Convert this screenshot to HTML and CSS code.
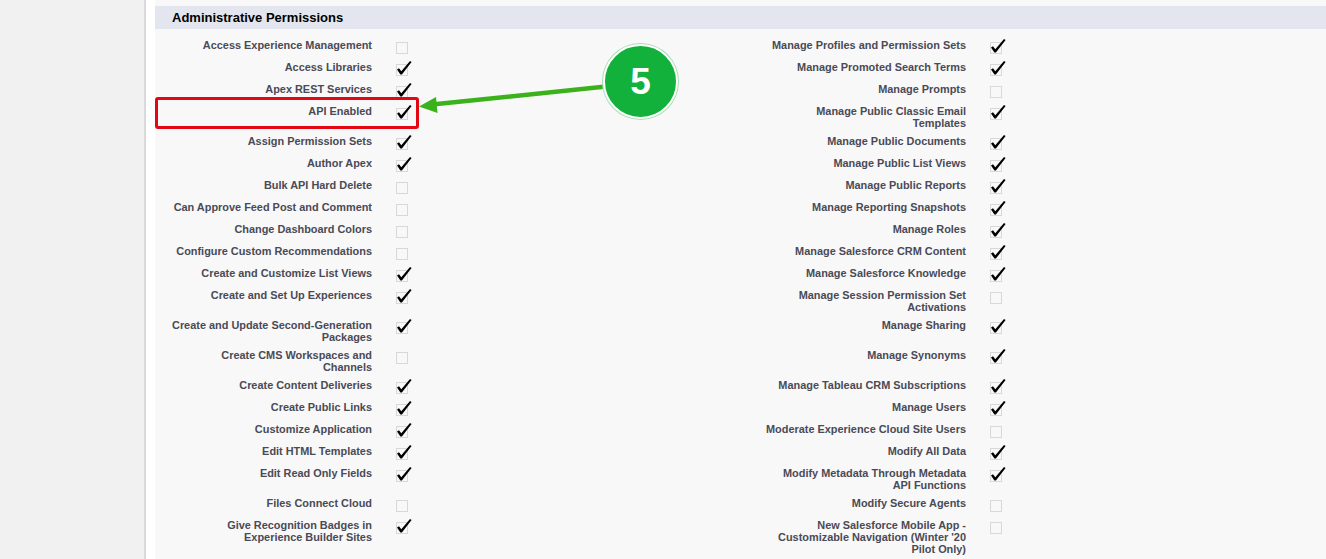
FILE: index.html
```html
<!DOCTYPE html>
<html lang="en">
<head>
    <meta charset="UTF-8">
    <title>Profile - Administrative Permissions</title>
    <link rel="stylesheet" href="styles.css">
</head>
<body>
    <div class="page">
        <div class="sidebar"></div>
        <div class="main">
            <div class="section">
                <div class="section-head">
                    <h3>Administrative Permissions</h3>
                </div>
                <table class="perm-table">
                    <colgroup>
                        <col class="col-label">
                        <col class="col-data">
                        <col class="col-label-r">
                        <col>
                    </colgroup>
                    <tbody id="permRows"></tbody>
                </table>
            </div>
        </div>
    </div>

    <!-- tutorial annotations -->
    <div class="highlight"></div>
    <svg class="arrow" width="1326" height="559" viewBox="0 0 1326 559">
        <line x1="432" y1="104.6" x2="606" y2="86.5" stroke="#3bb21c" stroke-width="4.5"/>
        <polygon points="419,106.5 436,97 437.5,113" fill="#3bb21c"/>
    </svg>
    <div class="step-badge">5</div>

    <script>
        const PERMISSIONS = [
            ['Access Experience Management', false, 'Manage Profiles and Permission Sets', true],
            ['Access Libraries', true, 'Manage Promoted Search Terms', true],
            ['Apex REST Services', true, 'Manage Prompts', false],
            ['API Enabled', true, 'Manage Public Classic Email Templates', true],
            ['Assign Permission Sets', true, 'Manage Public Documents', true],
            ['Author Apex', true, 'Manage Public List Views', true],
            ['Bulk API Hard Delete', false, 'Manage Public Reports', true],
            ['Can Approve Feed Post and Comment', false, 'Manage Reporting Snapshots', true],
            ['Change Dashboard Colors', false, 'Manage Roles', true],
            ['Configure Custom Recommendations', false, 'Manage Salesforce CRM Content', true],
            ['Create and Customize List Views', true, 'Manage Salesforce Knowledge', true],
            ['Create and Set Up Experiences', true, 'Manage Session Permission Set Activations', false],
            ['Create and Update Second-Generation Packages', true, 'Manage Sharing', true],
            ['Create CMS Workspaces and Channels', false, 'Manage Synonyms', true],
            ['Create Content Deliveries', true, 'Manage Tableau CRM Subscriptions', true],
            ['Create Public Links', true, 'Manage Users', true],
            ['Customize Application', true, 'Moderate Experience Cloud Site Users', false],
            ['Edit HTML Templates', true, 'Modify All Data', true],
            ['Edit Read Only Fields', true, 'Modify Metadata Through Metadata API Functions', true],
            ['Files Connect Cloud', false, 'Modify Secure Agents', false],
            ['Give Recognition Badges in Experience Builder Sites', true, "New Salesforce Mobile App - Customizable Navigation (Winter '20 Pilot Only)", false]
        ];

        const tbody = document.getElementById('permRows');

        function checkbox(checked) {
            const mark = checked
                ? '<path d="M1 8.6 L3 7.2 L5.3 10.2 L14 0 L15.6 1.1 L5.9 13.6 L4.4 13.6 Z" fill="#000"/>'
                : '';
            return '<svg class="cb" width="17" height="16" viewBox="0 0 17 16">' +
                '<rect x="0.5" y="3.5" width="11" height="11" fill="none" stroke="#b9b9b9" stroke-dasharray="1 1"/>' +
                mark + '</svg>';
        }

        PERMISSIONS.forEach(([leftLabel, leftOn, rightLabel, rightOn]) => {
            const row = document.createElement('tr');
            row.innerHTML =
                `<td class="label">${leftLabel}</td>` +
                `<td class="data">${checkbox(leftOn)}</td>` +
                `<td class="label label-r">${rightLabel}</td>` +
                `<td class="data">${checkbox(rightOn)}</td>`;
            tbody.appendChild(row);
        });
    </script>
</body>
</html>
```

FILE: styles.css
```css
* {
    box-sizing: border-box;
}

body {
    margin: 0;
    background-color: #f1f1f1;
    font-family: 'Liberation Sans', Arial, sans-serif;
    position: relative;
    overflow: hidden;
}

.page {
    display: flex;
    min-height: 100vh;
}

.sidebar {
    width: 146px;
    flex-shrink: 0;
    background-color: #f1f1f1;
    border-right: 2px solid #dadada;
}

.main {
    flex: 1;
    background-color: #fff;
    padding-left: 9px;
}

.section {
    background-color: #f8f8f8;
    padding-top: 6px;
    min-height: 100vh;
}

.section-head {
    height: 23px;
    background-color: #e3e6ef;
    padding-left: 17px;
}

.section-head h3 {
    margin: 0;
    font-size: 13px;
    line-height: 23px;
    font-weight: bold;
    color: #000;
}

.perm-table {
    width: 100%;
    margin-top: 7px;
    border-collapse: collapse;
    table-layout: fixed;
}

.col-label {
    width: 227px;
}

.col-data {
    width: 379px;
}

.col-label-r {
    width: 215px;
}

.perm-table td {
    vertical-align: top;
    padding: 3px 0;
}

.perm-table .label {
    padding: 3px 10px 3px 15.5px;
    text-align: right;
    font-size: 10.92px;
    line-height: 12px;
    font-weight: bold;
    color: #4a4a56;
}

.perm-table .label-r {
    padding-left: 3.5px;
}

.perm-table .data {
    padding-left: 14px;
}

.cb {
    display: block;
}

.highlight {
    position: absolute;
    left: 155px;
    top: 97px;
    width: 264px;
    height: 32px;
    border: 3px solid #e30613;
    border-radius: 3px;
}

.arrow {
    position: absolute;
    left: 0;
    top: 0;
    pointer-events: none;
}

.step-badge {
    position: absolute;
    left: 603px;
    top: 44px;
    width: 75px;
    height: 75px;
    border-radius: 50%;
    background-color: #12b13b;
    border: 2px solid #fff;
    box-shadow: 0 0 0 1px #a8ddb4;
    display: flex;
    align-items: center;
    justify-content: center;
    color: #fff;
    font-size: 37px;
    font-weight: bold;
}
```
